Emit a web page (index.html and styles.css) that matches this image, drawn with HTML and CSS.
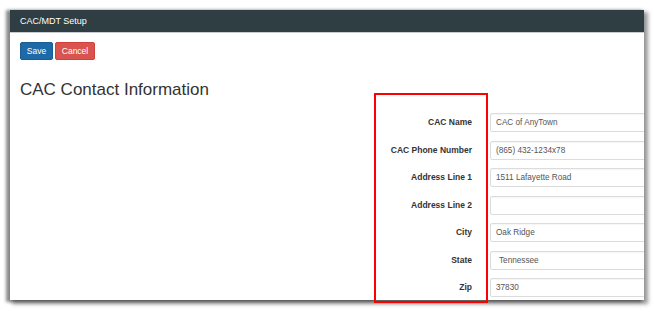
FILE: index.html
```html
<!DOCTYPE html>
<html>
<head>
<meta charset="utf-8">
<link rel="stylesheet" href="styles.css">
</head>
<body>
<div class="panel">
  <div class="topbar">CAC/MDT Setup</div>
  <div class="content">
    <div class="actions">
      <button class="btn btn-save">Save</button>
      <button class="btn btn-cancel">Cancel</button>
    </div>
    <h1 class="title">CAC Contact Information</h1>
    <div class="form">
      <label class="lbl">CAC Name</label><div class="inp">CAC of AnyTown</div>
      <label class="lbl">CAC Phone Number</label><div class="inp">(865) 432-1234x78</div>
      <label class="lbl">Address Line 1</label><div class="inp">1511 Lafayette Road</div>
      <label class="lbl">Address Line 2</label><div class="inp"></div>
      <label class="lbl">City</label><div class="inp">Oak Ridge</div>
      <label class="lbl">State</label><div class="inp inp-select">Tennessee</div>
      <label class="lbl">Zip</label><div class="inp">37830</div>
    </div>
  </div>
</div>
<div class="highlight"></div>
</body>
</html>
```

FILE: styles.css
```css
html, body {
  margin: 0;
  padding: 0;
  background: #ffffff;
  font-family: "Liberation Sans", Arial, sans-serif;
}
body {
  width: 654px;
  height: 313px;
  overflow: hidden;
  position: relative;
}
.panel {
  margin: 10px 0 0 10px;
  width: 634px;
  height: 290px;
  background: #fff;
  box-shadow: -3px 1px 3px 1px rgba(0,0,0,0.45), 3px 3px 4px 1px rgba(0,0,0,0.4);
  overflow: hidden;
}
.topbar {
  height: 22px;
  background: #2f3e43;
  border-bottom: 1px solid #c5cbcf;
  color: #fff;
  font-size: 9px;
  line-height: 22px;
  padding-left: 10px;
}
.content {
  padding-left: 10px;
}
.actions {
  display: flex;
  gap: 2px;
  padding-top: 9px;
}
.btn {
  font-family: "Liberation Sans", Arial, sans-serif;
  font-size: 8.5px;
  color: #fff;
  height: 18px;
  border-radius: 2px;
  padding: 0;
  cursor: pointer;
}
.btn-save {
  width: 33px;
  background: #1e6aa8;
  border: 1px solid #1a5d94;
}
.btn-cancel {
  width: 40px;
  background: #d9534f;
  border: 1px solid #d1403b;
}
.title {
  margin: 20px 0 0 0;
  font-size: 17px;
  line-height: 19px;
  font-weight: normal;
  color: #333;
}
.form {
  margin-top: 14px;
  display: grid;
  grid-template-columns: 452px 170px;
  column-gap: 18px;
  row-gap: 8.5px;
}
.lbl {
  text-align: right;
  font-size: 8.5px;
  font-weight: bold;
  color: #333;
  line-height: 19px;
}
.inp {
  height: 17px;
  border: 1px solid #dcdcdc;
  border-radius: 2px;
  font-size: 8.2px;
  color: #555;
  line-height: 17px;
  padding-left: 5px;
  box-shadow: inset 0 1px 1px rgba(0,0,0,0.04);
}
.inp-select {
  padding-left: 8px;
}
.highlight {
  position: absolute;
  left: 374px;
  top: 93px;
  width: 110px;
  height: 206px;
  border: 2px solid #ff0000;
}
```
